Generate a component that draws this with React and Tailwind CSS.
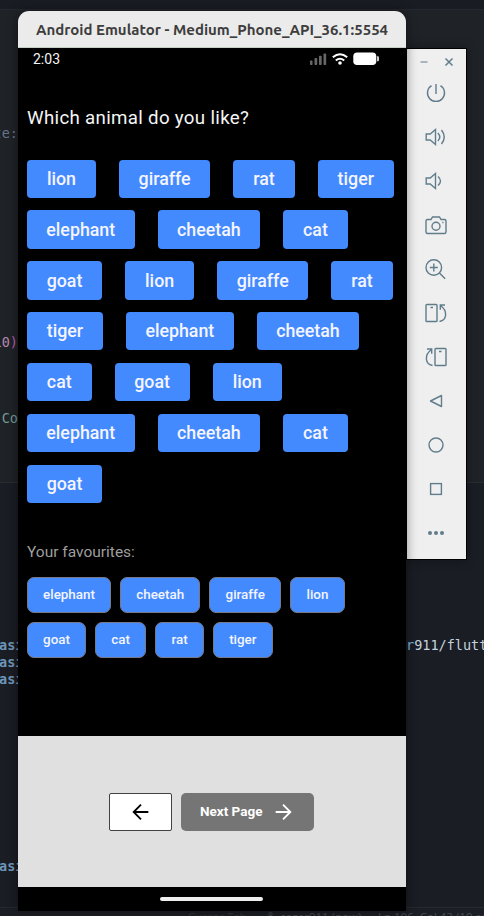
const widths = {
  lion: 'w-[69px]', giraffe: 'w-[91px]', rat: 'w-[61.5px]', tiger: 'w-[76px]',
  elephant: 'w-[107.5px]', cheetah: 'w-[102.5px]', cat: 'w-[64.5px]', goat: 'w-[75px]',
};
const rows = [
  ['lion', 'giraffe', 'rat', 'tiger'],
  ['elephant', 'cheetah', 'cat'],
  ['goat', 'lion', 'giraffe', 'rat'],
  ['tiger', 'elephant', 'cheetah'],
  ['cat', 'goat', 'lion'],
  ['elephant', 'cheetah', 'cat'],
  ['goat'],
];
const favourites = [
  [['elephant', 'w-[84px]'], ['cheetah', 'w-[80px]'], ['giraffe', 'w-[71.7px]'], ['lion', 'w-[54.5px]']],
  [['goat', 'w-[59px]'], ['cat', 'w-[51px]'], ['rat', 'w-[48.5px]'], ['tiger', 'w-[59.5px]']],
];

function Icon({ children }) {
  return (
    <svg className="h-6 w-6 shrink-0" viewBox="0 0 24 24" fill="none" stroke="#607d8b" strokeWidth="1.4">
      {children}
    </svg>
  );
}

function Editor() {
  return (
    <div className="flex h-[916px] w-[484px] flex-col overflow-hidden bg-[#1b1e24] font-['DejaVu_Sans_Mono',monospace] text-[13.5px] leading-[17px]">
      <div className="h-[10px] border-b border-[#25282e] bg-[#191c23]" />
      <div className="flex h-[473px] flex-col border-b border-[#292c31] bg-[#1f2227]">
        <div className="mt-[115px] flex w-[18px] justify-end text-[#64748b]">te:</div>
        <div className="mt-[192px] flex w-[18px] justify-end text-[#b98aae]">10<span className="text-[#b65fb8]">)</span></div>
        <div className="mt-[59px] flex w-[18px] justify-end text-[#729b94]">Co</div>
      </div>
      <div className="flex h-[424px] flex-col bg-[#1a1d24] text-[#6f96b9]">
        <div className="mt-[154px] flex justify-between">
          <span className="-ml-px font-bold">asi</span>
          <span className="w-[78px] whitespace-nowrap text-[#c3d2df]"><span className="text-[#82b4dc]">r</span>911/flutt</span>
        </div>
        <div className="-ml-px font-bold">asi</div>
        <div className="-ml-px font-bold">asi</div>
        <div className="-ml-px mt-[170px] font-bold">asi</div>
      </div>
      <div className="flex h-[9px] overflow-hidden whitespace-nowrap border-t border-[#25282e] pl-[188px] pt-[2px] font-['Open_Sans',sans-serif] text-[11.5px] leading-[14px] text-[#484a55]">
        <span className="w-[77px] shrink-0 text-[#32343c]">Cursor Tab</span>
        <span className="w-[15px] shrink-0">⚘</span>
        <span className="w-[98px] shrink-0">cozar911 (now)</span>
        <span className="shrink-0">Ln 106, Col 43 (10 selected)</span>
      </div>
    </div>
  );
}

function StatusBar() {
  return (
    <div className="flex h-[22px] items-center justify-between pl-[15px] pr-[27px]">
      <span className="text-[14px] leading-none text-[#f4f4f4]">2:03</span>
      <svg className="h-[14px] w-[70px]" viewBox="0 0 70 14">
        <g fill="#666">
          <rect x="1" y="8.5" width="2.5" height="4.5" rx=".8" />
          <rect x="5.5" y="6" width="2.7" height="7" rx=".8" />
          <rect x="10" y="3.8" width="2.7" height="9.2" rx=".8" />
          <rect x="14.5" y="1.5" width="2.7" height="11.5" rx=".8" />
        </g>
        <g fill="none" stroke="#fff" strokeWidth="2">
          <path d="M23.8 5.2Q31 -.8 38.2 5.2" />
          <path d="M26.8 8.5Q31 5 35.2 8.5" />
        </g>
        <circle cx="31" cy="11" r="1.8" fill="#fff" />
        <rect x="44.3" y=".5" width="23" height="12.6" rx="3.8" fill="#fff" />
        <path d="M68 4.2h1q1 0 1 1v3q0 1-1 1h-1z" fill="#ccc" />
      </svg>
    </div>
  );
}

function Phone() {
  return (
    <div className="absolute left-[18px] top-[11px] flex h-[900px] w-[388px] flex-col overflow-hidden rounded-t-[11px] bg-black font-[Roboto,sans-serif] shadow-[0_0_12px_rgba(0,0,0,0.45)]">
      <div className="flex h-[37px] shrink-0 items-center justify-center border-b border-[#c5cfc6] bg-[#ebebeb] pt-[2px] font-[Ubuntu,'Open_Sans',sans-serif] text-[15px] font-bold text-[#3d3d3d]">
        <span className="whitespace-nowrap">Android Emulator - Medium_Phone_API_36.1:5554</span>
      </div>
      <StatusBar />
      <h1 className="ml-[9px] mt-[36px] h-[24px] whitespace-nowrap text-[18.7px] leading-[24px] tracking-[0.32px] text-[#f5f5f5]">Which animal do you like?</h1>
      <div className="ml-[9px] mt-[29.6px] flex flex-col gap-[12.7px]">
        {rows.map((row, i) => (
          <div key={i} className="flex gap-[23.1px]">
            {row.map((name) => (
              <button key={name} className={`${widths[name]} flex h-[38.2px] items-center justify-center rounded-[4px] bg-[#448aff] text-[17.8px] font-medium leading-none text-[#f5f5ff]`}>{name}</button>
            ))}
          </div>
        ))}
      </div>
      <h2 className="ml-[9px] mt-[39.2px] h-[20px] whitespace-nowrap text-[15.5px] leading-[20px] text-[#9e9e9e]">Your favourites:</h2>
      <div className="ml-[9px] mt-[14.5px] flex flex-col gap-[9.4px]">
        {favourites.map((row, i) => (
          <div key={i} className="flex gap-[9.2px]">
            {row.map(([name, width]) => (
              <span key={name} className={`${width} flex h-[35.8px] items-center justify-center rounded-[7px] border border-[#777989] bg-[#448aff] text-[13.4px] font-medium leading-none text-[#f3f5ff]`}>{name}</span>
            ))}
          </div>
        ))}
      </div>
      <div className="mt-auto flex h-[151px] shrink-0 items-center justify-center gap-[9px] bg-[#e0e0e0] pr-px">
        <button className="flex h-[38px] w-[63px] items-center justify-center rounded-[2px] border border-[#424242] bg-white">
          <svg className="h-[22px] w-[22px]" viewBox="0 0 24 24" fill="none" stroke="#000" strokeWidth="2"><path d="M20 12H5M12 4l-8 8 8 8" /></svg>
        </button>
        <button className="flex h-[38px] w-[133px] items-center rounded-[5px] bg-[#757575] pl-[19px] text-[13.5px] font-bold text-white">
          <span className="w-[72px] whitespace-nowrap text-left">Next Page</span>
          <svg className="h-[22px] w-[22px]" viewBox="0 0 24 24" fill="none" stroke="#fff" strokeWidth="2"><path d="M4 12h15M12 4l8 8-8 8" /></svg>
        </button>
      </div>
      <div className="flex h-[24px] shrink-0 items-center justify-center pr-px">
        <div className="h-[4px] w-[103px] rounded-full bg-[#eee]" />
      </div>
    </div>
  );
}

function Toolbar() {
  return (
    <div className="absolute left-[406px] top-[48px] flex h-[512px] w-[61px] flex-col items-center border border-black bg-[#efefef] shadow-[0_0_10px_rgba(0,0,0,0.35)]">
      <div className="flex h-[26px] w-full shrink-0 items-center justify-center gap-[15px] pr-px">
        <svg className="h-[10px] w-[10px]" viewBox="0 0 10 10"><path d="M1.5 5h7" stroke="#8fa3ac" strokeWidth="1.5" /></svg>
        <svg className="h-[10px] w-[10px]" viewBox="0 0 10 10"><path d="M1.5 1.5l7 7m0-7l-7 7" stroke="#607d8b" strokeWidth="1.5" /></svg>
      </div>
      <div className="mt-[6px] flex flex-col gap-5 pr-[2px]">
        <Icon><path d="M12 3v10M7.5 4.7a8.5 8.5 0 1 0 9 0" /></Icon>
        <Icon><path d="M2.2 9h4L11.5 4.5v15L6.2 15h-4zM13.8 8q4 4 0 8M17.5 5q5.5 7 0 14" /></Icon>
        <Icon><path d="M2.2 9h4L11.5 4.5v15L6.2 15h-4zM14 7.5q5 4.5 0 9" /></Icon>
        <Icon><path d="M3.5 6.5H7L8.5 4h7L17 6.5h3.5q1.5 0 1.5 1.5v11q0 1.5-1.5 1.5h-17Q2 20.5 2 19V8q0-1.5 1.5-1.5z" /><circle cx="12" cy="13.3" r="4" /><path d="M18.3 9.5h1.2" /></Icon>
        <Icon><circle cx="9.8" cy="10.5" r="7.8" /><path d="M9.8 6.5v8M5.8 10.5h8M15.4 16l5.8 5.8" /></Icon>
        <Icon><rect x="2" y="3.5" width="11" height="17" rx=".8" /><path d="M6.5 6.5h2.5M15.5 20.5c7.5-1.5 8.5-10.5 1-16M21 4h-4.7v4.7" /></Icon>
        <Icon><rect x="11" y="3.5" width="11" height="17" rx=".8" /><path d="M15 6.5h2.5M8.5 20.5c-7.5-1.5-8.5-10.5-1-16M3 4h4.7v4.7" /></Icon>
        <Icon><path d="M17.5 6.5v11L6.5 12z" strokeLinejoin="round" /></Icon>
        <Icon><circle cx="12" cy="12" r="7" /></Icon>
        <Icon><rect x="6.6" y="6.6" width="10.8" height="10.8" /></Icon>
        <Icon><g fill="#607d8b" stroke="none"><circle cx="6" cy="12" r="2" /><circle cx="12" cy="12" r="2" /><circle cx="18" cy="12" r="2" /></g></Icon>
      </div>
    </div>
  );
}

export default function App() {
  return (
    <div className="relative h-[916px] w-[484px] overflow-hidden">
      <Editor />
      <Toolbar />
      <Phone />
    </div>
  );
}
